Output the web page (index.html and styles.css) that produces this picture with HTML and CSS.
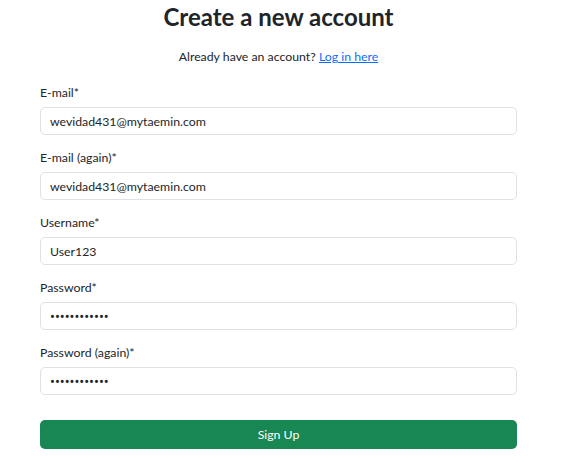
FILE: index.html
```html
<!DOCTYPE html>
<html lang="en">
<head>
<meta charset="utf-8">
<title>Create a new account</title>
<link rel="stylesheet" href="styles.css">
</head>
<body>
<main class="page">
  <h1 class="title">Create a new account</h1>
  <p class="subtitle">Already have an account? <a href="#" class="link">Log in here</a></p>
  <form class="form">
    <div class="group">
      <label class="label">E-mail*</label>
      <input class="input" type="text" value="wevidad431@mytaemin.com">
    </div>
    <div class="group">
      <label class="label">E-mail (again)*</label>
      <input class="input" type="text" value="wevidad431@mytaemin.com">
    </div>
    <div class="group">
      <label class="label">Username*</label>
      <input class="input" type="text" value="User123">
    </div>
    <div class="group">
      <label class="label">Password*</label>
      <input class="input input-password" type="password" value="password1234">
    </div>
    <div class="group">
      <label class="label">Password (again)*</label>
      <input class="input input-password" type="password" value="password1234">
    </div>
    <button type="button" class="btn">Sign Up</button>
  </form>
</main>
</body>
</html>
```
FILE: styles.css
```css
* { box-sizing: border-box; }
html, body { margin: 0; padding: 0; background: #fff; }
body {
  font-family: Lato, "Liberation Sans", sans-serif;
  color: #212529;
  font-size: 12.3px;
}
.page {
  width: 477px;
  margin-left: 40px;
  display: flex;
  flex-direction: column;
}
.title {
  margin: 3px 0 0;
  font-size: 24px;
  font-weight: 700;
  line-height: 28px;
  text-align: center;
}
.subtitle {
  margin: 16px 0 0;
  text-align: center;
  line-height: 20px;
}
.link { color: #0d6efd; text-decoration: underline; }
.form {
  margin-top: 16px;
  display: flex;
  flex-direction: column;
}
.group {
  display: flex;
  flex-direction: column;
  gap: 4px;
  margin-bottom: 13px;
}
.label { line-height: 20px; }
.input {
  height: 28px;
  border: 1px solid #dee2e6;
  border-radius: 5px;
  padding: 0 9px;
  font: inherit;
  color: #212529;
  outline: none;
}
.input-password {
  font-family: "Noto Sans", sans-serif;
  font-size: 13px;
}
.btn {
  margin-top: 12px;
  height: 29px;
  border: none;
  border-radius: 5px;
  background: #198754;
  color: #fff;
  font: inherit;
}
```
